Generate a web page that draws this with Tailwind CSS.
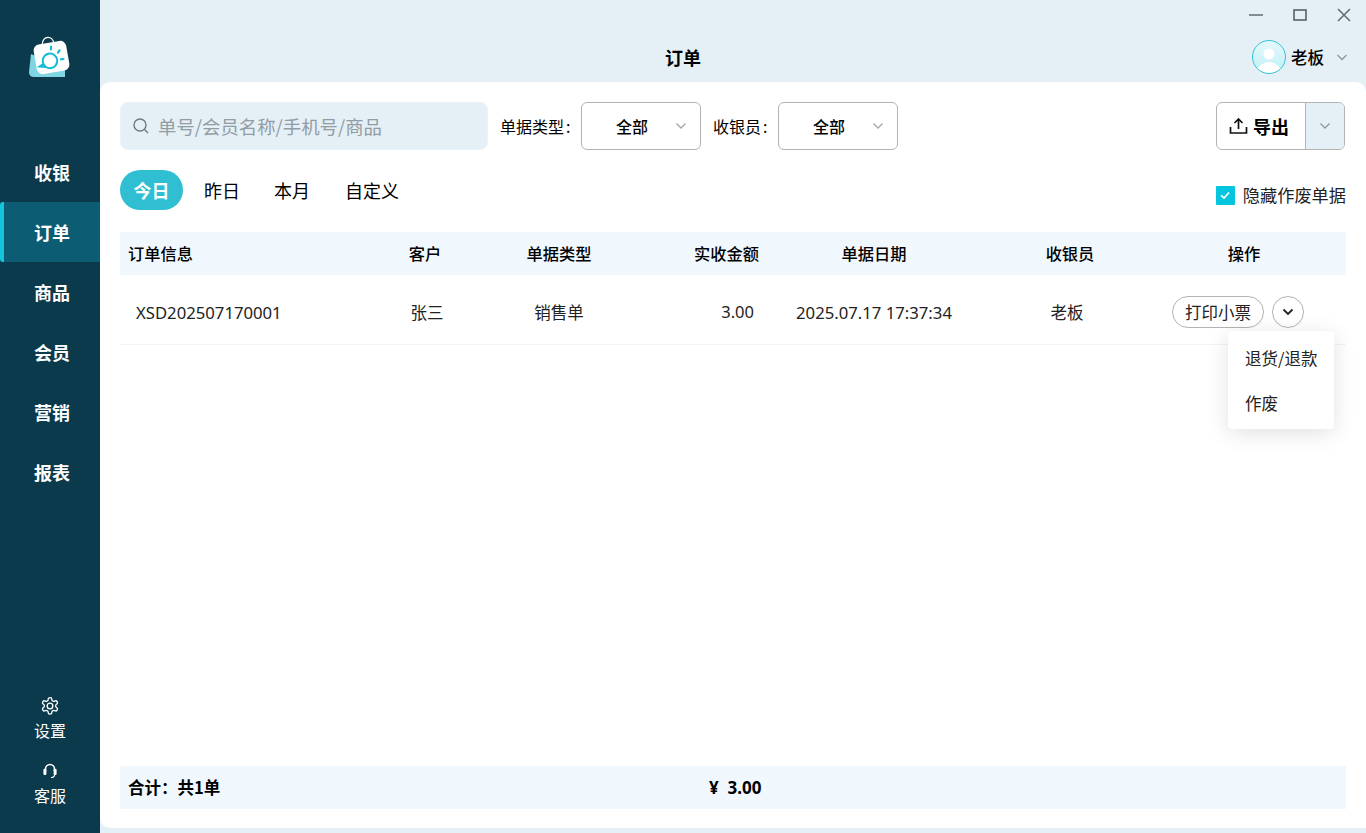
<!DOCTYPE html>
<html lang="zh-CN">
<head>
<meta charset="utf-8" />
<title>订单</title>
<script src="https://cdn.jsdelivr.net/npm/@tailwindcss/browser@4"></script>
</head>
<body class="font-['Noto_Sans_CJK_SC','Noto_Sans',sans-serif] text-black">
<div class="flex w-[1366px] h-[833px] overflow-hidden bg-[#e4eff6]">

  <!-- Sidebar -->
  <aside class="w-[100px] shrink-0 flex flex-col bg-[#0b3a4d] text-white">
    <div class="h-[142px] pt-[36px] pl-[29px]">
      <svg width="44" height="44" viewBox="0 0 44 44">
        <path d="M13 9 C14 -1 24 -1 25 8" fill="none" stroke="#fff" stroke-width="1.300"/>
        <path d="M2 18 L0 36 Q0 41 5 41 L36 41 L36 32 Z" fill="#7fd6e2"/>
        <rect x="6" y="6.500" width="33" height="30" rx="6" fill="#fff" transform="rotate(-10 22.500 21.500)"/>
        <path d="M17 31 A7.300 7.300 0 1 0 15.500 20" fill="none" stroke="#12bcd6" stroke-width="2"/>
        <path d="M15.500 20 A7.300 7.300 0 0 0 17 31 L10.500 30.500 L15 27.500" fill="none" stroke="#12bcd6" stroke-width="2"/>
        <path d="M22 10.500 L22 13.500 M30.500 14.500 L29 16.500 M34.500 23 L32 23.300" stroke="#12bcd6" stroke-width="2.200" stroke-linecap="round"/>
      </svg>
    </div>
    <nav class="flex flex-col text-[18px] font-bold">
      <a class="h-[60px] flex items-center justify-center pl-[4px]">收银</a>
      <a class="h-[60px] flex items-center justify-center bg-[#0c5d73] border-l-[4px] border-[#12c4dc] rounded-l-[3px]">订单</a>
      <a class="h-[60px] flex items-center justify-center pl-[4px]">商品</a>
      <a class="h-[60px] flex items-center justify-center pl-[4px]">会员</a>
      <a class="h-[60px] flex items-center justify-center pl-[4px]">营销</a>
      <a class="h-[60px] flex items-center justify-center pl-[4px]">报表</a>
    </nav>
    <div class="mt-auto flex flex-col items-center text-[16px] pb-[27px]">
      <svg width="20" height="20" viewBox="0 0 24 24" fill="none" stroke="#fff" stroke-width="1.600" stroke-linejoin="round">
        <path d="M12.200 2h-.4a2 2 0 0 0-2 2v.2a2 2 0 0 1-1 1.700l-.4.2a2 2 0 0 1-2 0l-.2-.1a2 2 0 0 0-2.700.7l-.2.4a2 2 0 0 0 .7 2.700l.2.1a2 2 0 0 1 1 1.700v.5a2 2 0 0 1-1 1.700l-.2.1a2 2 0 0 0-.7 2.700l.2.4a2 2 0 0 0 2.700.7l.2-.1a2 2 0 0 1 2 0l.4.2a2 2 0 0 1 1 1.700v.2a2 2 0 0 0 2 2h.4a2 2 0 0 0 2-2v-.2a2 2 0 0 1 1-1.700l.4-.2a2 2 0 0 1 2 0l.2.1a2 2 0 0 0 2.700-.7l.2-.4a2 2 0 0 0-.7-2.700l-.2-.1a2 2 0 0 1-1-1.700v-.5a2 2 0 0 1 1-1.700l.2-.1a2 2 0 0 0 .7-2.700l-.2-.4a2 2 0 0 0-2.700-.7l-.2.1a2 2 0 0 1-2 0l-.4-.2a2 2 0 0 1-1-1.700V4a2 2 0 0 0-2-2z"/>
        <circle cx="12" cy="12" r="3.400"/>
      </svg>
      <span class="leading-[22px] mt-[3px]">设置</span>
      <svg class="mt-[21px]" width="18" height="18" viewBox="0 0 18 18" fill="none">
        <path d="M4.500 9V7a4.500 4.500 0 0 1 9 0v2" stroke="#fff" stroke-width="1.600"/>
        <rect x="2.400" y="6.800" width="3" height="6.200" rx="1.200" fill="#fff"/>
        <rect x="12.600" y="6.800" width="3" height="6.200" rx="1.200" fill="#fff"/>
        <path d="M13.500 13c0 1.800-1.500 2.500-3.500 2.500" stroke="#fff" stroke-width="1.200"/>
      </svg>
      <span class="leading-[22px] mt-[4px]">客服</span>
    </div>
  </aside>

  <div class="flex-1 flex flex-col min-w-0">
    <!-- Title bar -->
    <header class="relative h-[82px] shrink-0 flex items-end justify-center pb-[13px] pr-[100px]">
      <h1 class="text-[18px] font-bold leading-[24px]">订单</h1>
      <div class="absolute top-[8px] right-[15px] flex items-center gap-[30px]">
        <svg width="14" height="14" viewBox="0 0 14 14"><path d="M0 7H14" stroke="#606a70" stroke-width="1.500"/></svg>
        <svg width="14" height="14" viewBox="0 0 14 14"><rect x="1" y="2" width="12" height="10" fill="none" stroke="#606a70" stroke-width="1.700"/></svg>
        <svg width="14" height="14" viewBox="0 0 14 14"><path d="M1 1L13 13M13 1L1 13" stroke="#606a70" stroke-width="1.500"/></svg>
      </div>
      <div class="absolute top-[40px] right-[18px] flex items-center">
        <svg width="34" height="34" viewBox="0 0 34 34">
          <defs>
            <clipPath id="av"><circle cx="17" cy="17" r="16.500"/></clipPath>
            <linearGradient id="avbg" x1="0" y1="0" x2="0" y2="1"><stop offset="0" stop-color="#e6f9fb"/><stop offset="1" stop-color="#bfeff6"/></linearGradient>
          </defs>
          <circle cx="17" cy="17" r="16.500" fill="url(#avbg)"/>
          <g clip-path="url(#av)"><circle cx="17" cy="14" r="5.500" fill="#fff"/><ellipse cx="17" cy="34" rx="12" ry="12" fill="#fff"/></g>
          <circle cx="17" cy="17" r="16.500" fill="none" stroke="#36c3d6"/>
        </svg>
        <span class="ml-[5px] text-[16.5px] font-medium leading-[22px]">老板</span>
        <svg class="ml-[12px]" width="12" height="12" viewBox="0 0 12 12"><path d="M1.500 4L6 8.500L10.500 4" fill="none" stroke="#8b979e" stroke-width="1.300"/></svg>
      </div>
    </header>

    <!-- Main panel -->
    <main class="relative h-[746px] shrink-0 bg-white rounded-t-[10px] rounded-bl-[10px] flex flex-col pl-[20px] pr-[20px] pt-[20px] pb-[19px]">
      <div class="flex items-center h-[48px]">
        <div class="w-[368px] h-[48px] rounded-[8px] bg-[#e4eff6] border border-[#eaf3f9] flex items-center pl-[11px]">
          <svg width="18" height="18" viewBox="0 0 18 18" fill="none" stroke="#6f7b82" stroke-width="1.400"><circle cx="8" cy="8" r="6"/><path d="M12.500 12.500L16 16"/></svg>
          <span class="ml-[8px] text-[18.4px] text-[#929ca3] leading-[24px]">单号/会员名称/手机号/商品</span>
        </div>
        <span class="ml-[12px] text-[16px] leading-[20px] w-[81px] whitespace-nowrap">单据类型<span class="ml-[2px]">:</span></span>
        <div class="w-[120px] h-[48px] rounded-[6px] border border-[#b3b3b3] flex items-center relative pl-[34px]">
          <span class="text-[16px] font-medium">全部</span>
          <svg class="absolute right-[13px] top-[18px]" width="12" height="10" viewBox="0 0 12 10"><path d="M1.500 2.500L6 7L10.500 2.500" fill="none" stroke="#a6a6a6" stroke-width="1.300"/></svg>
        </div>
        <span class="ml-[12px] text-[16px] leading-[20px] w-[65px] whitespace-nowrap">收银员<span class="ml-[2px]">:</span></span>
        <div class="w-[120px] h-[48px] rounded-[6px] border border-[#b3b3b3] flex items-center relative pl-[34px]">
          <span class="text-[16px] font-medium">全部</span>
          <svg class="absolute right-[13px] top-[18px]" width="12" height="10" viewBox="0 0 12 10"><path d="M1.500 2.500L6 7L10.500 2.500" fill="none" stroke="#a6a6a6" stroke-width="1.300"/></svg>
        </div>
        <div class="ml-auto mr-[1px] w-[129px] h-[48px] rounded-[6px] border border-[#b3b3b3] flex overflow-hidden">
          <div class="w-[89px] flex items-center pl-[12px] border-r border-[#b3b3b3]">
            <svg width="19" height="18" viewBox="0 0 19 18" fill="none" stroke="#111" stroke-width="1.700"><path d="M1.500 10V16H17.500V10"/><path d="M9.500 12V2M5.500 6L9.500 2L13.500 6"/></svg>
            <span class="ml-[5px] text-[18px] font-bold leading-[22px]">导出</span>
          </div>
          <div class="flex-1 bg-[#e4eff6] flex items-center justify-center">
            <svg width="12" height="10" viewBox="0 0 12 10"><path d="M1.500 2.500L6 7L10.500 2.500" fill="none" stroke="#8d999f" stroke-width="1.300"/></svg>
          </div>
        </div>
      </div>

      <div class="flex items-start mt-[20px] h-[62px]">
        <div class="flex items-center text-[18px] leading-[40px]">
          <span class="w-[63px] h-[40px] rounded-full bg-[#30bfd2] text-white font-bold text-center">今日</span>
          <span class="ml-[21px]">昨日</span>
          <span class="ml-[34px]">本月</span>
          <span class="ml-[35px]">自定义</span>
        </div>
        <label class="ml-auto mt-[14px] flex items-center text-[17.2px] leading-[22px]">
          <span class="w-[19px] h-[19px] rounded-[1px] bg-[#05c6de] flex items-center justify-center">
            <svg width="12" height="12" viewBox="0 0 12 12"><path d="M2 6.300L5 9L10 3.500" fill="none" stroke="#fff" stroke-width="1.800"/></svg>
          </span>
          <span class="ml-[8px] text-[#222]">隐藏作废单据</span>
        </label>
      </div>

      <!-- Table -->
      <div class="grid grid-cols-[250px_110px_158px_132px_208px_184px_164px_20px] h-[43px] items-center bg-[#f0f8fe] text-[16.25px] font-medium">
        <span class="pl-[8px]">订单信息</span>
        <span class="text-center">客户</span>
        <span class="text-center">单据类型</span>
        <span class="text-right pr-[11px]">实收金额</span>
        <span class="text-center">单据日期</span>
        <span class="text-center">收银员</span>
        <span class="text-center">操作</span>
      </div>
      <div class="grid grid-cols-[250px_110px_158px_132px_208px_184px_164px_20px] h-[70px] items-center border-b border-[#f2f5f8] text-[16.5px] text-[#222] pt-[4px]">
        <span class="mt-[2px] pl-[16px] text-[16.7px] font-['Noto_Sans',sans-serif]">XSD202507170001</span>
        <span class="mt-[2px] text-center pl-[4px]">张三</span>
        <span class="mt-[2px] text-center">销售单</span>
        <span class="mt-[2px] text-right pr-[16px] font-['Noto_Sans',sans-serif]">3.00</span>
        <span class="mt-[2px] text-center text-[16.7px] font-['Noto_Sans',sans-serif]">2025.07.17 17:37:34</span>
        <span class="mt-[2px] text-center pr-[6px]">老板</span>
        <div class="flex items-center pl-[10px] gap-[8px]">
          <span class="w-[92px] h-[32px] rounded-full border border-[#b3b3b3] text-center leading-[30px]">打印小票</span>
          <span class="w-[32px] h-[32px] rounded-full border border-[#b3b3b3] flex items-center justify-center">
            <svg width="14" height="12" viewBox="0 0 14 12"><path d="M2.500 3.500L7 8L11.500 3.500" fill="none" stroke="#222" stroke-width="1.800"/></svg>
          </span>
        </div>
      </div>
      <div class="flex-1"></div>
      <div class="h-[43px] grid grid-cols-[250px_110px_158px_132px_1fr] items-center bg-[#f0f8fe] text-[16.5px] font-bold">
        <span class="pl-[8px] col-span-3">合计&#xFF1A;共1单</span>
        <span class="pl-[71px] whitespace-pre text-[17px] font-['Noto_Sans',sans-serif]">¥  3.00</span>
      </div>

      <!-- Row action menu -->
      <div class="absolute left-[1128px] top-[249px] w-[106px] h-[98px] bg-white rounded-[4px] shadow-[0_4px_22px_rgba(0,0,0,0.12)] text-[16.5px] text-[#222] pl-[17px] pt-[5px]">
        <div class="h-[45px] leading-[45px] whitespace-nowrap">退货/退款</div>
        <div class="h-[45px] leading-[45px]">作废</div>
      </div>
    </main>
  </div>
</div>
</body>
</html>
